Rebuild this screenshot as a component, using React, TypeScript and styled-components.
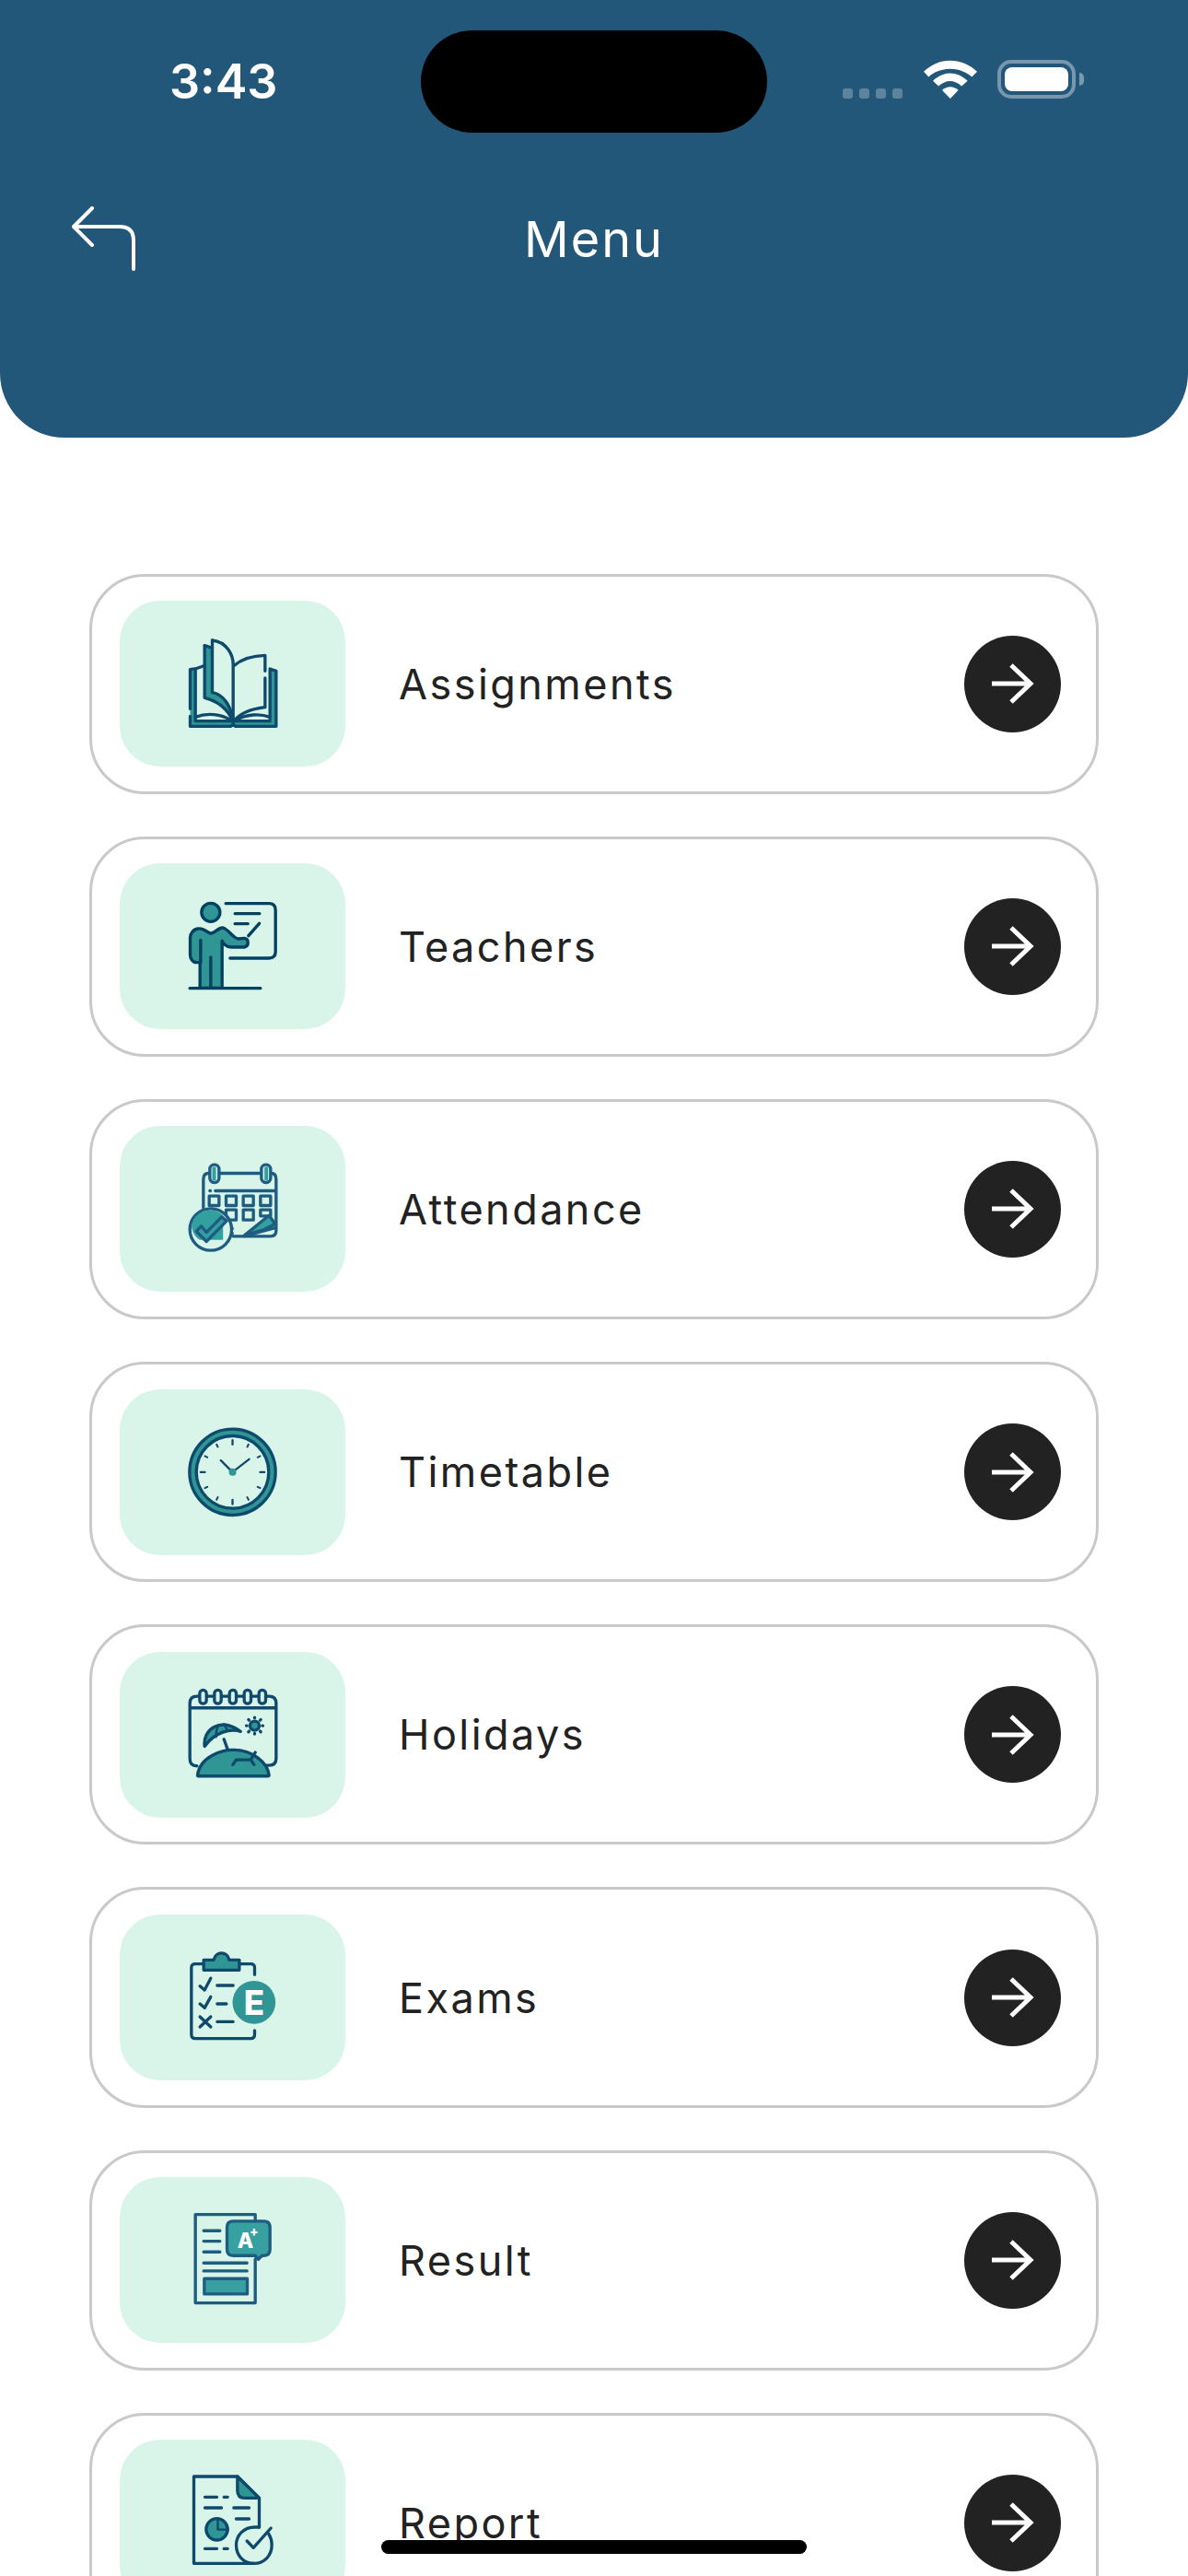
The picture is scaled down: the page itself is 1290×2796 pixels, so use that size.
import React from "react";
import styled, { createGlobalStyle } from "styled-components";

const Global = createGlobalStyle`
  html, body { margin: 0; padding: 0; background: #fff; }
  #root { width: 1290px; }
`;

const Screen = styled.div`
  position: relative;
  width: 1290px;
  height: 2796px;
  overflow: hidden;
  background: #fff;
  font-family: Inter, "Liberation Sans", sans-serif;
`;

const Header = styled.header`
  box-sizing: border-box;
  height: 475px;
  padding: 65px 78px 0;
  background: #235779;
  border-radius: 0 0 70px 70px;
  color: #fff;
`;

const StatusBar = styled.div`
  display: flex;
  justify-content: space-between;
  align-items: center;
  height: 42px;
  padding: 0 35px 0 106px;
`;

const Clock = styled.span`
  margin-top: 5px;
  font-size: 52px;
  font-weight: 600;
  line-height: 42px;
`;

const StatusIcons = styled.div`
  display: flex;
  align-items: flex-end;
  gap: 22px;
`;

const SignalDots = styled.div`
  display: flex;
  gap: 7px;
  margin-right: 1px;
`;

const SignalDot = styled.i`
  display: block;
  width: 11px;
  height: 11px;
  border-radius: 3px;
  background: rgba(255, 255, 255, 0.27);
`;

const Battery = styled.div`
  display: flex;
  align-items: center;
  gap: 4px;
`;

const BatteryShell = styled.div`
  box-sizing: border-box;
  width: 85px;
  height: 42px;
  padding: 4px;
  border: 4px solid rgba(255, 255, 255, 0.38);
  border-radius: 15px;
`;

const BatteryLevel = styled.div`
  width: 100%;
  height: 100%;
  background: #fff;
  border-radius: 8px;
`;

const BatteryCap = styled.div`
  width: 5px;
  height: 14px;
  background: rgba(255, 255, 255, 0.4);
  border-radius: 0 7px 7px 0;
`;

const Island = styled.div`
  position: absolute;
  left: 457px;
  top: 33px;
  width: 376px;
  height: 111px;
  background: #000;
  border-radius: 56px;
`;

const TitleBar = styled.div`
  display: grid;
  grid-template-columns: 1fr auto 1fr;
  align-items: center;
  height: 70px;
  margin-top: 117px;
`;

const Title = styled.h1`
  margin: 0;
  font-size: 54px;
  font-weight: 400;
  line-height: 70px;
  letter-spacing: 2px;
`;

const MenuList = styled.main`
  display: flex;
  flex-direction: column;
  gap: 46px;
  padding: 147.5px 97px 0;
`;

const Card = styled.div`
  box-sizing: border-box;
  flex: none;
  display: flex;
  align-items: center;
  height: 239.2px;
  padding: 0 38px 0 30px;
  border: 3px solid #c9c9c9;
  border-radius: 60px;
  background: #fff;
`;

const IconTile = styled.div`
  flex: none;
  display: flex;
  align-items: center;
  justify-content: center;
  width: 245px;
  height: 180px;
  background: #d9f5ea;
  border-radius: 44px;
`;

const Label = styled.span`
  flex: 1;
  margin-left: 58px;
  font-size: 45px;
  font-weight: 400;
  letter-spacing: 2.45px;
  color: #222;
`;

const GoButton = styled.div`
  flex: none;
  display: flex;
  align-items: center;
  justify-content: center;
  width: 105px;
  height: 105px;
  border-radius: 50%;
  background: #222;
`;

const HomeBar = styled.div`
  position: absolute;
  left: 414px;
  top: 2757px;
  width: 462px;
  height: 15px;
  background: #000;
  border-radius: 8px;
`;

const Art = styled.svg<{ $ink: string; $fill: string }>`
  display: block;
  overflow: visible;
  fill: none;
  stroke: ${(p) => p.$ink};
  stroke-width: 10;
  stroke-linecap: round;
  stroke-linejoin: round;
  .t { fill: ${(p) => p.$fill}; }
  .ts { fill: ${(p) => p.$fill}; stroke: none; }
  .l { fill: #d9f5ea; }
  text { stroke: none; fill: #fff; font-family: Inter, "Liberation Sans", sans-serif; font-weight: 800; }
`;

type ArtProps = { vy: number; ink?: string; fill?: string; children: React.ReactNode };
const Icon = ({ vy, ink = "#0f4a6c", fill = "#2f9595", children }: ArtProps) => (
  <Art $ink={ink} $fill={fill} width={170} height={140} viewBox={`-7.5 ${vy} 510 420`}>
    {children}
  </Art>
);

const BookIcon = () => (
  <Icon vy={6}>
    <path className="ts" d="M108 170h20v165h240V170h20v185H108z" />
    <path className="ts" d="M155 92l25 8v145c32 6 58 40 66 92-22-42-50-62-91-75z" />
    <path d="M108 170v128M108 322v33h132l8-6 8 6h132V175l-20-7M108 170l20-3M125 168l25-9M125 170v165M368 170v160" />
    <path d="M125 338h115M256 338h112M125 325c38-15 85-10 115 10M256 335c34-20 80-22 112-10" />
    <path d="M180 75v170c35 6 60 40 68 92M155 92v170c40 10 78 36 92 78" />
    <path d="M155 92l25 8M180 75c45 5 70 45 68 85v180M248 160c27-25 67-35 104-36v51M352 198v95c-42 5-82 17-102 47" />
  </Icon>
);

const TeacherIcon = () => (
  <Icon vy={22} ink="#02405f">
    <circle className="t" cx="175" cy="122" r="30" />
    <path
      className="t"
      d="M135 175c15-5 30 15 40 15 15 0 25-20 40-18 20 6 30 33 50 36l20-2c15 2 15 26 0 29h-45c-15 0-25-13-28-20v153h-72v-83h-12c-13 0-20-15-20-25v-55c0-15 12-30 27-30z"
    />
    <path d="M142 212v73M175 268v100M107 369h230M298 198l35-40M224 93h141q21 0 21 22v135q0 21-21 21H238M254 126h80M254 159h42" />
  </Icon>
);

const CalendarIcon = () => (
  <Icon vy={8.4} ink="#1e5c80" fill="#33a0a0">
    <path d="M172 103h-4q-17 0-17 20v92M202 103h138M370 103h2q16 0 16 20v167q0 18-18 18H248" />
    <rect className="l" x="172" y="75" width="30" height="58" rx="14" />
    <rect className="l" x="340" y="75" width="30" height="58" rx="14" />
    <path className="ts" d="M180 82h12v44h-12zM350 82h12v44h-12z" />
    <path d="M172 160h2M190 160h195" />
    <rect x="170" y="177" width="32" height="31" />
    <rect x="225" y="177" width="33" height="31" />
    <rect x="281" y="177" width="33" height="31" />
    <rect x="337" y="177" width="33" height="31" />
    <rect x="225" y="222" width="33" height="33" />
    <rect x="281" y="222" width="33" height="33" />
    <rect x="337" y="222" width="33" height="20" />
    <circle cx="175" cy="286" r="68" style={{ fill: "#d9f5ea" }} />
    <path className="ts" d="M175 224c18 0 30 6 40 16v80h-76c-18-12-26-30-26-48 4-28 30-48 62-48z" />
    <path className="t" d="M128 292l16-17 17 20 50-50 16 13-66 67z" />
    <path d="M245 282v2M245 298v2" />
    <path className="t" d="M285 305l80-65 20 28-40 20z" />
    <path d="M285 307l100-27" />
  </Icon>
);

const ClockIcon = () => (
  <Icon vy={-5.4}>
    <circle className="t" cx="246" cy="204" r="140" />
    <circle className="l" cx="246" cy="204" r="118" />
    <path strokeWidth="7" d="M246 204l-38-38M246 204l54-42M246 100v14M246 294v14M142 204h14M336 204h14" />
    <path strokeWidth="6" d="M194 114l4 8M298 114l-4 8M156 152l8 4M336 152l-8 4M156 256l8-4M336 256l-8-4M194 294l4-8M298 294l-4-8" />
    <circle className="ts" cx="246" cy="204" r="12" />
  </Icon>
);

const HolidayIcon = () => (
  <Icon vy={10.8}>
    <path d="M130 322q-23 0-23-24V118q0-23 23-23h235q23 0 23 23v180q0 22-23 22h-15M110 133h278" />
    {[150, 198, 247, 295, 343].map((x) => (
      <rect key={x} className="l" x={x - 11} y="75" width="22" height="44" rx="11" />
    ))}
    <circle className="t" cx="318" cy="191" r="15" />
    <path d="M318 166v-2M318 218v-2M293 191h-2M345 191h-2M300 173l-2-2M338 211l-2-2M300 209l-2 2M338 171l-2 2" />
    <path className="t" d="M155 258c-7-53 50-98 117-48-32-10-82 0-117 48z" />
    <path strokeWidth="7" d="M192 228c0-14 2-26 6-36M230 208c-4-8-8-16-12-22" />
    <path d="M218 235l20 55" />
    <path className="t" d="M132 352c8-62 85-84 118-82 60 0 110 40 115 82 0 3-2 3-5 3H135c-2 0-3-1-3-3z" />
    <path d="M247 318l11-16h47l11 16M305 302l15-24" />
  </Icon>
);

const ExamIcon = () => (
  <Icon vy={27}>
    <path d="M318 163v-23q0-12-13-12h-35M150 128h-25q-13 0-13 12v218q0 13 13 13h180q13 0 13-13v-13" />
    <path className="t" d="M152 115h33c5-30 45-30 50 0h33v33H152z" />
    <path d="M140 200l15 13 20-38M140 258l15 13 20-36M140 300l35 33M175 300l-35 33M196 198h52M196 258h30M196 316h52" />
    <circle className="ts" cx="316" cy="253" r="70" />
    <text x="316" y="293" fontSize="110" textAnchor="middle">E</text>
  </Icon>
);

const ResultIcon = () => (
  <Icon vy={103.2} ink="#1e5c80" fill="#38a0a0">
    <path d="M320 185v-20H125v288h195V310M152 218h53M152 252h53M152 287h53M152 323h141M152 349h141" />
    <rect className="t" x="154" y="374" width="140" height="50" />
    <path className="t" d="M248 187h100q20 0 20 20v72q0 20-20 20h-6l-12 12-10-12h-72q-20 0-20-20v-72q0-20 20-20z" />
    <text x="288" y="275" fontSize="68" textAnchor="middle">A</text>
    <text x="316" y="236" fontSize="42" textAnchor="middle">+</text>
  </Icon>
);

const ReportIcon = () => (
  <Icon vy={60}>
    <path d="M333 285V190l-71-70H120v283h195" />
    <path className="t" d="M262 120l71 70h-48q-23 0-23-25z" />
    <path d="M156 187h39M218 187h12M156 222h54M250 222h50M258 258h42M156 355h39M218 355h12" />
    <path d="M333 285h-15c-35 0-60 26-60 58 0 36 25 60 58 60 34 0 58-26 58-60 0-15-4-26-10-36" />
    <path d="M293 330l21 22 57-64" />
    <circle className="t" cx="195" cy="292" r="35" />
    <path d="M198 258v35h34" strokeWidth="7" />
  </Icon>
);

const items = [
  { label: "Assignments", icon: <BookIcon /> },
  { label: "Teachers", icon: <TeacherIcon /> },
  { label: "Attendance", icon: <CalendarIcon /> },
  { label: "Timetable", icon: <ClockIcon /> },
  { label: "Holidays", icon: <HolidayIcon /> },
  { label: "Exams", icon: <ExamIcon /> },
  { label: "Result", icon: <ResultIcon /> },
  { label: "Report", icon: <ReportIcon /> },
];

export default function App() {
  return (
    <Screen>
      <Global />
      <Header>
        <StatusBar>
          <Clock>3:43</Clock>
          <StatusIcons>
            <SignalDots>
              <SignalDot />
              <SignalDot />
              <SignalDot />
              <SignalDot />
            </SignalDots>
            <svg width="58" height="42" viewBox="372 75 173 125" fill="#fff">
              <path d="M372 113c48-48 123-48 173 0l-17 17c-38-35-103-35-140 0z" />
              <path d="M402 143c33-33 78-33 112 0l-19 17c-25-22-50-22-75 0z" />
              <path d="M432 173c16-15 36-15 52 0l-26 27z" />
            </svg>
            <Battery>
              <BatteryShell>
                <BatteryLevel />
              </BatteryShell>
              <BatteryCap />
            </Battery>
          </StatusIcons>
        </StatusBar>
        <TitleBar>
          <svg width="70" height="72" viewBox="0 0 70 72" fill="none" stroke="#fff" strokeWidth="4" strokeLinecap="round" strokeLinejoin="round">
            <path d="M22 2L2 22l20 20M2 22h50q15 0 15 15v31" />
          </svg>
          <Title>Menu</Title>
        </TitleBar>
      </Header>
      <Island />
      <MenuList>
        {items.map((it) => (
          <Card key={it.label}>
            <IconTile>{it.icon}</IconTile>
            <Label>{it.label}</Label>
            <GoButton>
              <svg width="46" height="44" viewBox="0 0 46 44" fill="none" stroke="#fff" strokeWidth="5">
                <path d="M0 22h43M21 2l21 20-21 20" />
              </svg>
            </GoButton>
          </Card>
        ))}
      </MenuList>
      <HomeBar />
    </Screen>
  );
}
